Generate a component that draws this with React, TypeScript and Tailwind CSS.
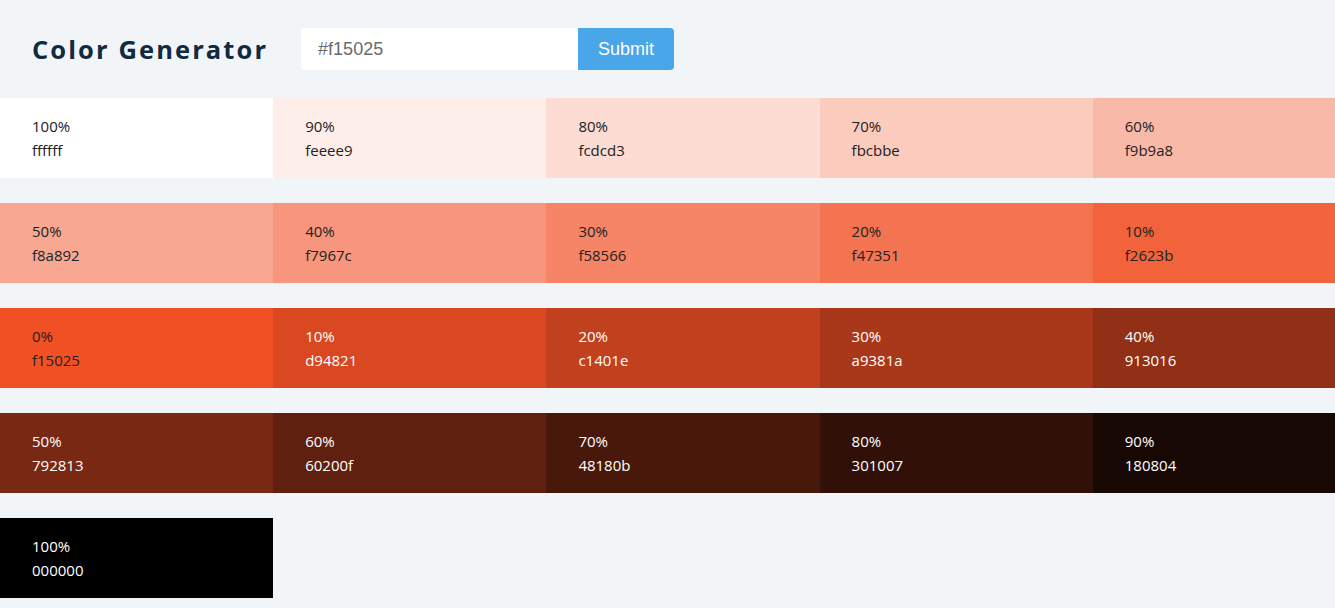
const tints = [
  ['100%', 'ffffff'],
  ['90%', 'feeee9'],
  ['80%', 'fcdcd3'],
  ['70%', 'fbcbbe'],
  ['60%', 'f9b9a8'],
  ['50%', 'f8a892'],
  ['40%', 'f7967c'],
  ['30%', 'f58566'],
  ['20%', 'f47351'],
  ['10%', 'f2623b'],
]

const shades = [
  ['0%', 'f15025'],
  ['10%', 'd94821'],
  ['20%', 'c1401e'],
  ['30%', 'a9381a'],
  ['40%', '913016'],
  ['50%', '792813'],
  ['60%', '60200f'],
  ['70%', '48180b'],
  ['80%', '301007'],
  ['90%', '180804'],
  ['100%', '000000'],
]

const colors = [
  ...tints.map(([w, hex]) => ({ w, hex, light: false })),
  ...shades.map(([w, hex], i) => ({ w, hex, light: i > 0 })),
]

function Swatch({ w, hex, light }: { w: string; hex: string; light: boolean }) {
  return (
    <article
      className={light ? 'h-[80px] px-8 py-4 text-[15px] leading-6 text-white' : 'h-[80px] px-8 py-4 text-[15px] leading-6 text-[#222]'}
      style={{ backgroundColor: `#${hex}` }}
    >
      <p>{w}</p>
      <p>{hex}</p>
    </article>
  )
}

export default function App() {
  return (
    <main className="min-h-screen overflow-hidden bg-[#f1f5f8] font-['Open_Sans','Noto_Sans',sans-serif]">
      <section className="flex h-[98px] items-center px-8">
        <h3 className="text-[25.5px] font-bold tracking-[2.1px] text-[#102a42]">Color Generator</h3>
        <form className="ml-[33px] flex" onSubmit={(e) => e.preventDefault()}>
          <input
            type="text"
            defaultValue="#f15025"
            className="h-[42px] w-[277px] rounded-l bg-white px-[17px] font-['Liberation_Sans',Arial,sans-serif] text-[18px] text-[#6b6b6b] outline-none"
          />
          <button
            type="submit"
            className="h-[42px] w-[96px] rounded-r bg-[#49a6e9] font-['Liberation_Sans',Arial,sans-serif] text-[18px] text-white"
          >
            Submit
          </button>
        </form>
      </section>
      <section className="grid w-[1366px] grid-cols-5 gap-y-[25px]">
        {colors.map((c, i) => (
          <Swatch key={i} {...c} />
        ))}
      </section>
    </main>
  )
}
